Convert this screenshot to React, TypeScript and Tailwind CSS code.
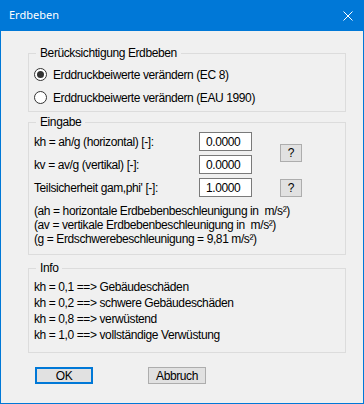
import React from "react";

const FONT = { fontFamily: '"Liberation Sans", Arial, sans-serif' };

const INFO = [
  "kh = 0,1 ==> Gebäudeschäden",
  "kh = 0,2 ==> schwere Gebäudeschäden",
  "kh = 0,8 ==> verwüstend",
  "kh = 1,0 ==> vollständige Verwüstung",
];

function Radio({ checked, label }: { checked?: boolean; label: string }) {
  return (
    <div className="flex items-center h-[23px]">
      <span className="flex items-center justify-center w-[13px] h-[13px] rounded-full border border-[#333333] bg-white">
        {checked && <span className="w-[7px] h-[7px] rounded-full bg-[#333333]" />}
      </span>
      <span className="ml-[6px]">{label}</span>
    </div>
  );
}

function Group({ title, children, className }: { title: string; children: React.ReactNode; className?: string }) {
  return (
    <fieldset className={`w-[318px] border border-[#dcdcdc] pl-[5px] pr-[5px] ${className ?? ""}`}>
      <legend className="ml-[2px] px-[4px] leading-[14px]">{title}</legend>
      {children}
    </fieldset>
  );
}

function Field({ value }: { value: string }) {
  return (
    <div className="w-[53px] h-[19px] border border-[#7a7a7a] bg-white pl-[6px] flex items-center leading-none">
      {value}
    </div>
  );
}

function Help() {
  return (
    <div className="w-[22px] h-[18px] border border-[#adadad] bg-[#e1e1e1] flex items-center justify-center leading-none">
      ?
    </div>
  );
}

export default function App() {
  return (
    <div
      className="w-[364px] h-[404px] bg-[#f0f0f0] border-x border-b border-[#0078d7] text-[12px] tracking-[-0.4px] text-black flex flex-col"
      style={FONT}
    >
      {/* Titlebar */}
      <div className="h-[31px] -mx-px bg-[#0078d7] flex items-center justify-between pl-[9px] pr-[11px] text-white shrink-0">
        <span className="text-[11px] tracking-normal" style={{ fontFamily: '"Noto Sans", sans-serif' }}>Erdbeben</span>
        <svg width="10" height="10" viewBox="0 0 10 10" className="mt-px">
          <path d="M0.5 0.5 L9.5 9.5 M9.5 0.5 L0.5 9.5" stroke="white" strokeWidth="1" />
        </svg>
      </div>

      <div className="pl-[27px] pt-[15px] flex flex-col">
        <Group title="Berücksichtigung Erdbeben" className="pb-[2px]">
          <div className="mt-[3px]">
            <Radio checked label="Erddruckbeiwerte verändern (EC 8)" />
            <Radio label="Erddruckbeiwerte verändern (EAU 1990)" />
          </div>
        </Group>

        <Group title="Eingabe" className="mt-[3px] pb-[8px]">
          <div className="mt-[1px] grid grid-cols-[165px_53px_28px_22px] grid-rows-[23px_23px_23px] items-center">
            <span className="col-start-1 row-start-1 whitespace-nowrap">kh = ah/g (horizontal) [-]:</span>
            <div className="col-start-2 row-start-1"><Field value="0.0000" /></div>
            <div className="col-start-4 row-start-1 row-span-2 flex items-center"><Help /></div>
            <span className="col-start-1 row-start-2 whitespace-nowrap">kv = av/g (vertikal) [-]:</span>
            <div className="col-start-2 row-start-2"><Field value="0.0000" /></div>
            <span className="col-start-1 row-start-3 whitespace-nowrap">Teilsicherheit gam,phi' [-]:</span>
            <div className="col-start-2 row-start-3"><Field value="1.0000" /></div>
            <div className="col-start-4 row-start-3"><Help /></div>
          </div>
          <div className="mt-[5px] leading-[14px] whitespace-pre">
            <div>(ah = horizontale Erdbebenbeschleunigung in  m/s²)</div>
            <div>(av = vertikale Erdbebenbeschleunigung in  m/s²)</div>
            <div>(g = Erdschwerebeschleunigung = 9,81 m/s²)</div>
          </div>
        </Group>

        <Group title="Info" className="mt-[6px] pb-[9px]">
          <div className="mt-[4px] leading-[16px]">
            {INFO.map((t) => (
              <div key={t}>{t}</div>
            ))}
          </div>
        </Group>

        <div className="mt-[14px] ml-[7px] flex items-center gap-[55px]">
          <button className="w-[58px] h-[17px] border-2 border-[#0078d7] bg-[#e1e1e1] flex items-center justify-center leading-none">
            OK
          </button>
          <button className="w-[58px] h-[17px] border border-[#adadad] bg-[#e1e1e1] flex items-center justify-center leading-none">
            Abbruch
          </button>
        </div>
      </div>
    </div>
  );
}
